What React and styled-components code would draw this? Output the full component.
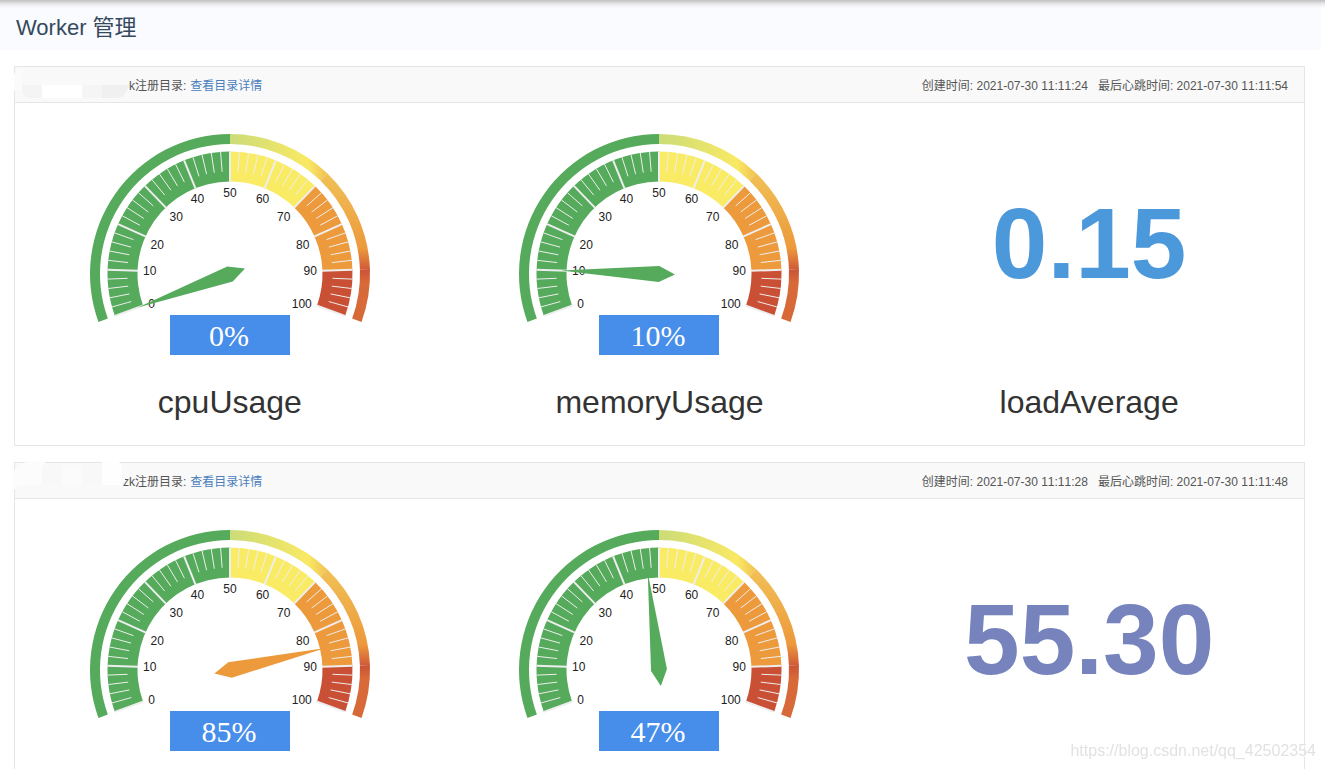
import styled, { createGlobalStyle } from "styled-components";

const GlobalStyle = createGlobalStyle`
  * {
    box-sizing: border-box;
  }
  body {
    margin: 0;
    background: #fff;
    color: #333;
    font-family: "Liberation Sans", "Noto Sans CJK SC", sans-serif;
    font-size: 12px;
  }
`;

const Page = styled.div`
  position: relative;
  min-height: 100vh;
  padding-right: 4px;
`;

const TopShadow = styled.div`
  position: absolute;
  top: 0;
  left: 0;
  right: 0;
  height: 8px;
  background: linear-gradient(#bfbfbf, rgba(220, 220, 220, 0.6) 50%, rgba(250, 251, 255, 0));
`;

const PageHeader = styled.header`
  display: flex;
  align-items: center;
  height: 50px;
  padding: 6px 16px 0;
  background: #fafbff;
`;

const PageTitle = styled.h1`
  margin: 0;
  color: #34495e;
  font-size: 22px;
  font-weight: 400;
  line-height: 32px;
`;

const WorkerList = styled.main`
  display: flex;
  flex-direction: column;
  gap: 16px;
  padding: 16px 16px 16px 14px;
`;

const Panel = styled.section`
  border: 1px solid #e5e5e5;
  background: #fff;
`;

const PanelHeader = styled.div`
  display: flex;
  align-items: center;
  justify-content: space-between;
  height: 36px;
  padding-right: 16px;
  border-bottom: 1px solid #e5e5e5;
  background: #f9f9f9;
  color: #555;
  line-height: 20px;
`;

const Directory = styled.div`
  display: flex;
  align-items: center;
`;

// blurred-out host name, it runs a little over the label
const HostMask = styled.svg`
  display: block;
  position: relative;
  flex: none;
  width: ${(props) => props.$width}px;
  height: 35px;
  overflow: visible;
`;

const DirectoryLabel = styled.span`
  margin-right: 4px;
  padding-top: 2px;
`;

const DirectoryLink = styled.a`
  padding-top: 2px;
  color: #4a80bd;
  text-decoration: none;
`;

const Times = styled.div`
  display: flex;
  gap: 10px;
  padding-top: 2px;
  font-kerning: none;
`;

const PanelBody = styled.div`
  display: grid;
  grid-template-columns: repeat(3, 1fr);
  padding: 20px 0 23px;
`;

const Metric = styled.div`
  display: flex;
  flex-direction: column;
  align-items: center;
`;

const GaugeSvg = styled.svg`
  display: block;
  width: 300px;
  height: 240px;
`;

const Scale = styled.text`
  fill: #222;
  font-size: 12px;
`;

const Detail = styled.text`
  fill: #fff;
  font-family: "Liberation Serif", serif;
  font-size: 30px;
`;

const LoadValue = styled.div`
  display: flex;
  align-items: center;
  height: 240px;
  color: ${(props) => props.$color};
  font-size: 100px;
  font-weight: 700;
  line-height: 120px;
`;

const MetricName = styled.h2`
  margin: 19px 0 0;
  color: #333;
  font-size: 32px;
  font-weight: 400;
  line-height: 40px;
`;

const Watermark = styled.div`
  position: fixed;
  right: 9px;
  bottom: 8px;
  color: #e2e2e2;
  font-size: 16px;
  line-height: 20px;
  text-shadow: 1px 1px 0 #fff;
`;

const GREEN = "#55aa5b";
const YELLOW = "#faeb64";
const ORANGE = "#ec9a3c";
const RED = "#c94f35";

const BANDS = [
  { from: 0, to: 50, color: GREEN, ring: GREEN },
  { from: 50, to: 70, color: YELLOW, ring: "url(#ring-yellow)" },
  { from: 70, to: 90, color: ORANGE, ring: "url(#ring-orange)" },
  { from: 90, to: 100, color: RED, ring: "url(#ring-red)" },
];

const CX = 150;
const CY = 151;

// the dial runs clockwise from 200deg down to -20deg
const toRad = (value) => ((200 - value * 2.2) * Math.PI) / 180;

const point = (value, r) => [
  CX + Math.cos(toRad(value)) * r,
  CY - Math.sin(toRad(value)) * r,
];

const sector = (from, to, inner, outer) => {
  const [x1, y1] = point(from, outer);
  const [x2, y2] = point(to, outer);
  const [x3, y3] = point(to, inner);
  const [x4, y4] = point(from, inner);
  return `M${x1} ${y1}A${outer} ${outer} 0 0 1 ${x2} ${y2}L${x3} ${y3}A${inner} ${inner} 0 0 0 ${x4} ${y4}Z`;
};

function Tick({ value }) {
  const major = value % 10 === 0;
  const [x1, y1] = point(value, 122.5);
  const [x2, y2] = point(value, major ? 92 : 102.5);
  return (
    <line
      x1={x1}
      y1={y1}
      x2={x2}
      y2={y2}
      stroke="#eee"
      strokeWidth={major ? 2 : 1}
    />
  );
}

function ScaleLabel({ value }) {
  const ux = Math.cos(toRad(value));
  const uy = -Math.sin(toRad(value));
  const [x, y] = point(value, 87);
  const anchor = ux < -0.4 ? "start" : ux > 0.4 ? "end" : "middle";
  return (
    <Scale x={x} y={y + (uy < -0.4 ? 10 : 4)} textAnchor={anchor}>
      {value}
    </Scale>
  );
}

function Pointer({ value }) {
  const a = toRad(value);
  const band = BANDS.find((b) => value <= b.to);
  const dx = Math.cos(a);
  const dy = -Math.sin(a);
  const points = [
    [CX - dx * 16, CY - dy * 16],
    [CX - dy * 8, CY + dx * 8],
    [CX + dx * 98, CY + dy * 98],
    [CX + dy * 8, CY - dx * 8],
  ];
  return <polygon points={points.join(" ")} fill={band.color} />;
}

function Gauge({ value }) {
  const ticks = Array.from({ length: 51 }, (_, i) => i * 2);
  return (
    <GaugeSvg viewBox="0 0 300 240">
      {BANDS.map((b) => (
        <g key={b.from}>
          <path d={sector(b.from, b.to, 130, 140)} fill={b.ring} />
          <path d={sector(b.from, b.to, 92.5, 122.5)} fill={b.color} />
        </g>
      ))}
      {ticks.map((t) => (
        <Tick key={t} value={t} />
      ))}
      {ticks
        .filter((t) => t % 10 === 0)
        .map((t) => (
          <ScaleLabel key={t} value={t} />
        ))}
      <Pointer value={value} />
      <rect x="90" y="192" width="120" height="40" fill="#478dea" />
      <Detail x="149" y="223" textAnchor="middle">
        {value}%
      </Detail>
    </GaugeSvg>
  );
}

const Defs = styled.svg`
  position: absolute;
`;

// shared by every gauge on the page
function RingGradients() {
  return (
    <Defs width="0" height="0" aria-hidden="true">
      <defs>
        <linearGradient id="ring-yellow" x1="0" y1="0" x2="1" y2="0">
          <stop offset="0" stopColor="#cbdc78" />
          <stop offset="0.8" stopColor="#f9e964" />
          <stop offset="1" stopColor="#f1c153" />
        </linearGradient>
        <linearGradient id="ring-orange" x1="0" y1="0" x2="0" y2="1">
          <stop offset="0" stopColor="#f1c156" />
          <stop offset="0.78" stopColor="#ec993c" />
          <stop offset="1" stopColor="#cf5a38" />
        </linearGradient>
        <linearGradient id="ring-red" x1="0" y1="0" x2="0" y2="1">
          <stop offset="0" stopColor="#ca5136" />
          <stop offset="0.25" stopColor="#d86a39" />
          <stop offset="1" stopColor="#d76838" />
        </linearGradient>
      </defs>
    </Defs>
  );
}

const WORKERS = [
  {
    label: "k注册目录:",
    created: "2021-07-30 11:11:24",
    heartbeat: "2021-07-30 11:11:54",
    cpu: 0,
    memory: 10,
    load: "0.15",
    loadColor: "#4b98db",
    maskWidth: 114,
    mask: [
      "M-1 8Q0 2 7 2V24H-1Z #fbfbfb",
      "M7 18H27V31H14Q8 29 7 24Z #f4f4f4",
      "M27 18H67V31H27Z #ffffff",
      "M67 18H87V31H67Z #f5f5f5",
      "M87 18H114Q112 28 104 31H87Z #f0f0f0",
    ],
  },
  {
    label: "zk注册目录:",
    created: "2021-07-30 11:11:28",
    heartbeat: "2021-07-30 11:11:48",
    cpu: 85,
    memory: 47,
    load: "55.30",
    loadColor: "#7683bd",
    maskWidth: 108,
    mask: [
      "M-1 8Q4 -1 14 -1H30V2H27V22H4L-1 27Z #fcfcfc",
      "M27 2H47V22H27Z #f8f8f8",
      "M47 2H67V22H47Z #fbfbfb",
      "M67 2H87V22H67Z #f8f8f8",
      "M87 -1H104L107 2V22H87Z #fefefe",
      "M107 2H110V19L107 22Z #f9f9f9",
    ],
  },
];

function WorkerPanel({ worker }) {
  return (
    <Panel>
      <PanelHeader>
        <Directory>
          <HostMask $width={worker.maskWidth} aria-hidden="true">
            {worker.mask.map((m) => {
              const [d, fill] = m.split(" #");
              return <path key={d} d={d} fill={`#${fill}`} />;
            })}
          </HostMask>
          <DirectoryLabel>{worker.label}</DirectoryLabel>
          <DirectoryLink href="#">查看目录详情</DirectoryLink>
        </Directory>
        <Times>
          <span>创建时间: {worker.created}</span>
          <span>最后心跳时间: {worker.heartbeat}</span>
        </Times>
      </PanelHeader>
      <PanelBody>
        <Metric>
          <Gauge value={worker.cpu} />
          <MetricName>cpuUsage</MetricName>
        </Metric>
        <Metric>
          <Gauge value={worker.memory} />
          <MetricName>memoryUsage</MetricName>
        </Metric>
        <Metric>
          <LoadValue $color={worker.loadColor}>{worker.load}</LoadValue>
          <MetricName>loadAverage</MetricName>
        </Metric>
      </PanelBody>
    </Panel>
  );
}

export default function App() {
  return (
    <>
      <GlobalStyle />
      <RingGradients />
      <Page>
        <PageHeader>
          <PageTitle>Worker 管理</PageTitle>
        </PageHeader>
        <WorkerList>
          {WORKERS.map((w) => (
            <WorkerPanel key={w.created} worker={w} />
          ))}
        </WorkerList>
        <TopShadow />
        <Watermark>https://blog.csdn.net/qq_42502354</Watermark>
      </Page>
    </>
  );
}
